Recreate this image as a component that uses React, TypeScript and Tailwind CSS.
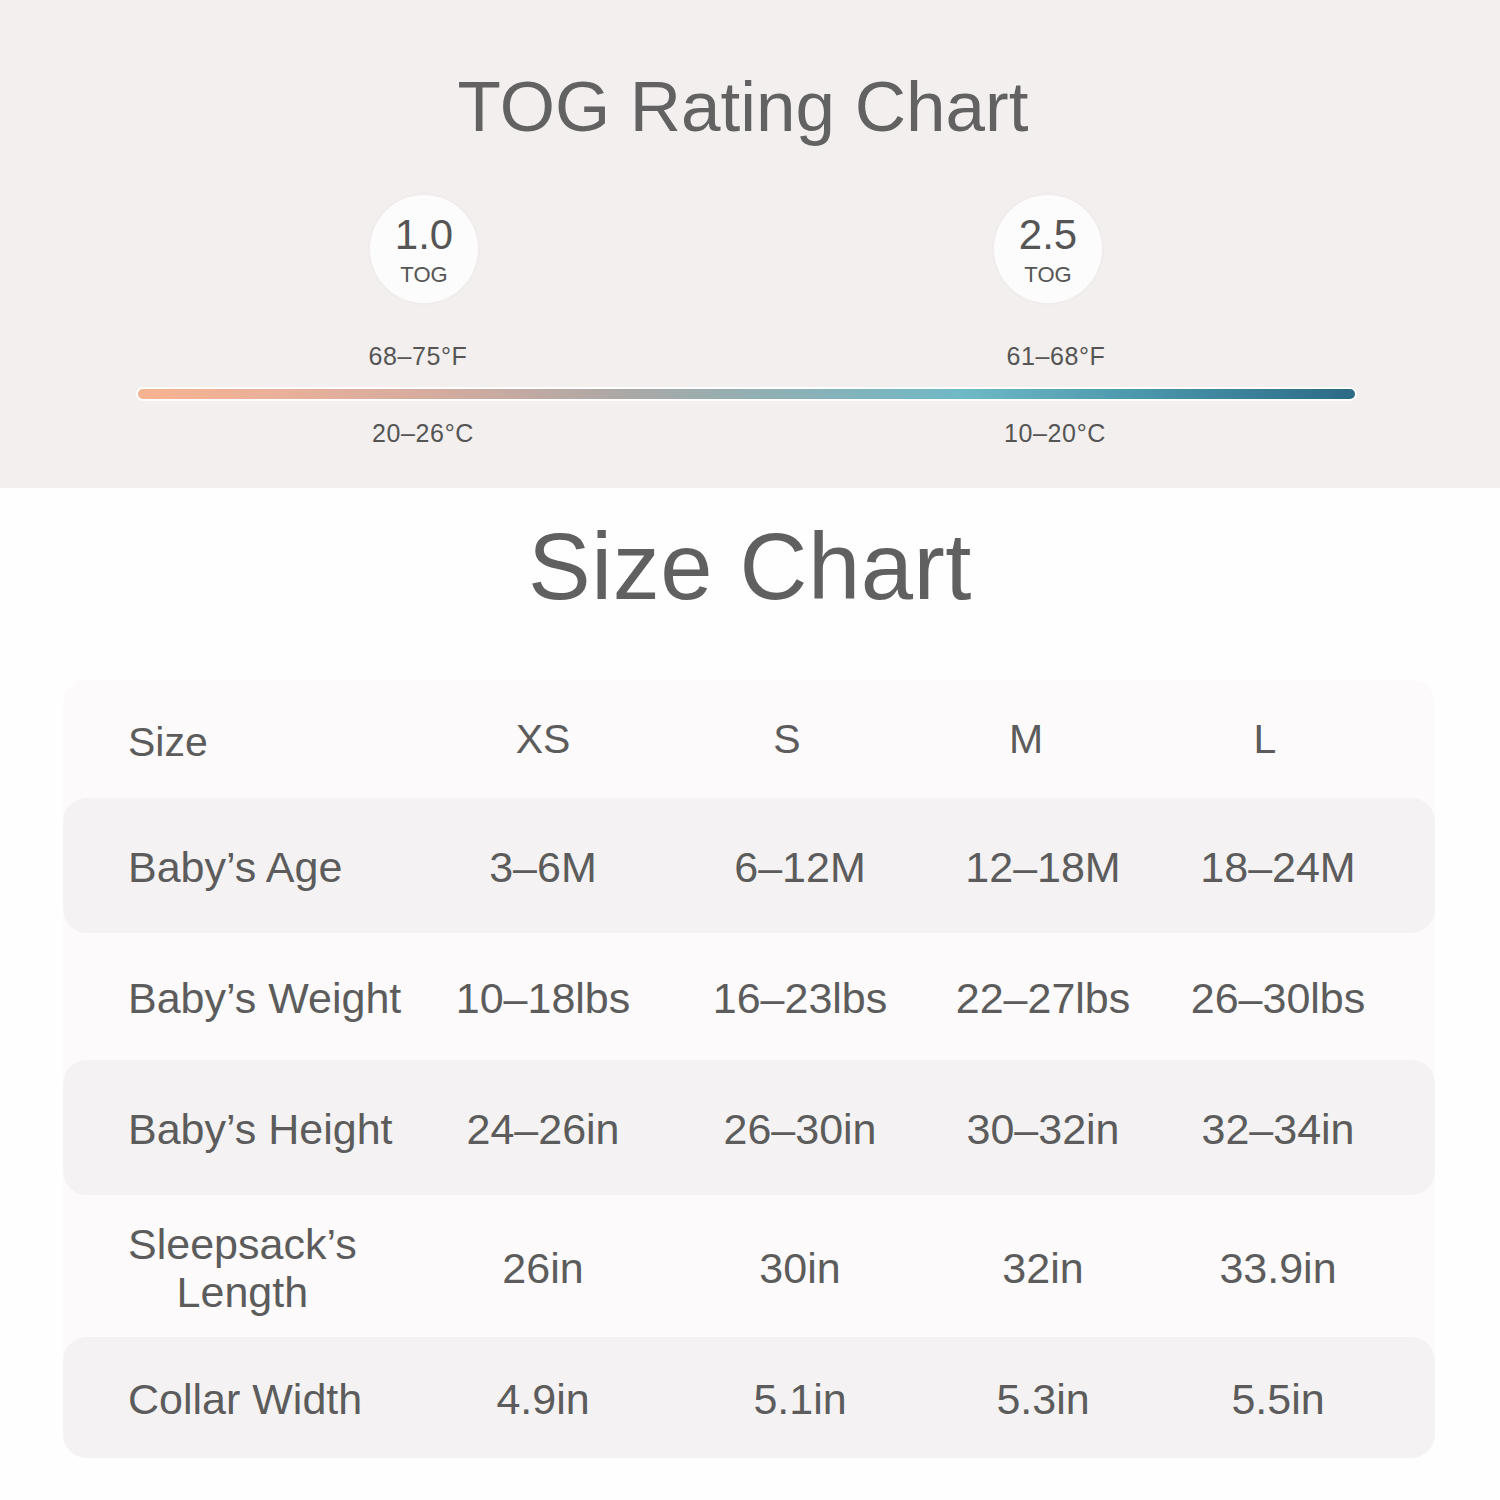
import React from "react";

const rows: { label: React.ReactNode; values: string[]; gray: boolean; h: string }[] = [
  { label: "Baby’s Age", values: ["3–6M", "6–12M", "12–18M", "18–24M"], gray: true, h: "h-[135px]" },
  { label: "Baby’s Weight", values: ["10–18lbs", "16–23lbs", "22–27lbs", "26–30lbs"], gray: false, h: "h-[127px]" },
  { label: "Baby’s Height", values: ["24–26in", "26–30in", "30–32in", "32–34in"], gray: true, h: "h-[135px]" },
  {
    label: (
      <span className="inline-block text-center leading-[48px]">
        Sleepsack’s
        <br />
        Length
      </span>
    ),
    values: ["26in", "30in", "32in", "33.9in"],
    gray: false,
    h: "h-[142px]",
  },
  { label: "Collar Width", values: ["4.9in", "5.1in", "5.3in", "5.5in"], gray: true, h: "h-[121px]" },
];

const colClasses = ["w-[256px]", "w-[258px]", "w-[228px]", "w-[242px]"];

function Marker({ value }: { value: string }) {
  return (
    <div className="w-[108px] h-[108px] rounded-full bg-[#fdfcfc] shadow-[0_0_4px_rgba(0,0,0,0.04)] flex flex-col items-center">
      <div className="mt-[19px] text-[42px] leading-none text-[#555555]">{value}</div>
      <div className="mt-[8px] text-[22px] leading-none text-[#555555]">TOG</div>
    </div>
  );
}

export default function App() {
  return (
    <div
      className="w-[1500px] h-[1500px] overflow-hidden bg-[#fefefe] flex flex-col"
      style={{ fontFamily: '"Liberation Sans", Arial, sans-serif' }}
    >
      {/* TOG section */}
      <div className="h-[488px] bg-[#f2efee] flex flex-col items-center shrink-0">
        <h1 className="mt-[71px] mr-[14px] h-[70px] text-[71px] leading-none text-[#626262]">TOG Rating Chart</h1>
        <div className="w-[1217px] mr-[7px] flex flex-col mt-[54px]">
          <div className="flex">
            <div className="ml-[232px]">
              <Marker value="1.0" />
            </div>
            <div className="ml-[516px]">
              <Marker value="2.5" />
            </div>
          </div>
          <div className="flex mt-[41px] h-[24px] text-[25px] leading-none text-[#555555] tracking-[0.6px]">
            <div className="ml-[180px] w-[200px] text-center">68–75°F</div>
            <div className="ml-[438px] w-[200px] text-center">61–68°F</div>
          </div>
          <div className="mt-[21px] h-[10px] rounded-full shadow-[0_0_0_2px_rgba(255,255,255,0.85)] bg-[linear-gradient(90deg,#f7b390_0%,#e9b09a_12%,#d2ab9f_26%,#aba8a6_40%,#8fb0b4_52%,#6fb9c6_68%,#4b98ad_82%,#2c6a85_100%)]" />
          <div className="flex mt-[22px] h-[24px] text-[25px] leading-none text-[#555555] tracking-[0.6px]">
            <div className="ml-[185px] w-[200px] text-center">20–26°C</div>
            <div className="ml-[432px] w-[200px] text-center">10–20°C</div>
          </div>
        </div>
      </div>

      {/* Size chart */}
      <div className="flex flex-col items-center">
        <h2 className="mt-[32px] h-[92px] text-[94px] leading-none text-[#606060] tracking-[0.5px]">Size Chart</h2>
        <div className="mt-[68px] mr-[2px] w-[1372px] rounded-[24px] bg-[#fcfafa] text-[#5c5c5c] text-[43px] leading-none">
          <div className="flex items-center h-[118px]">
            <div className="w-[352px] pl-[65px] pt-[6px] text-[41px]">Size</div>
            <div className="w-[256px] text-center text-[41px]">XS</div>
            <div className="w-[232px] text-center text-[41px]">S</div>
            <div className="w-[246px] text-center text-[41px]">M</div>
            <div className="w-[232px] text-center text-[41px]">L</div>
          </div>
          {rows.map((r, i) => (
            <div
              key={i}
              className={`flex items-center ${r.h} ${r.gray ? "bg-[#f4f2f2] rounded-[24px]" : ""}`}
            >
              <div className="w-[352px] pl-[65px] pt-[4px]">{r.label}</div>
              {r.values.map((v, j) => (
                <div key={j} className={`${colClasses[j]} pt-[4px] text-center whitespace-nowrap`}>
                  {v}
                </div>
              ))}
            </div>
          ))}
        </div>
      </div>
    </div>
  );
}
